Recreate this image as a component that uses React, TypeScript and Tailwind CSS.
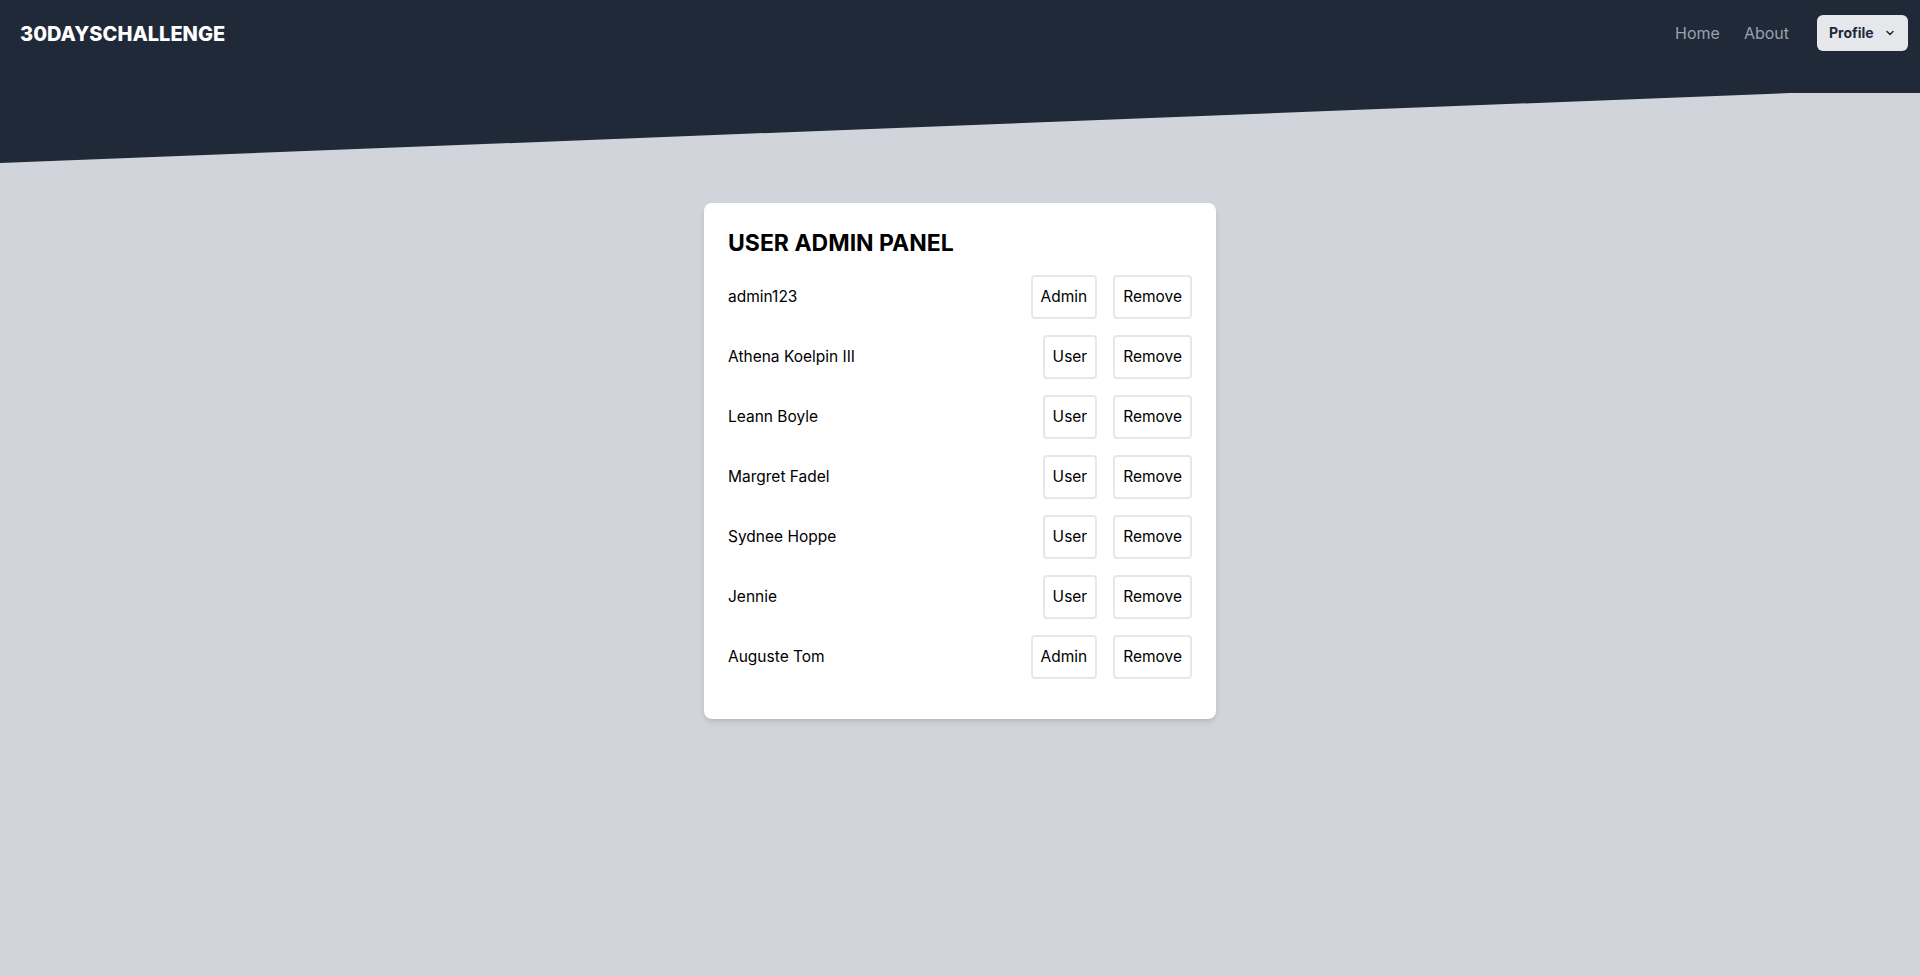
import React from "react";
import { ChevronDown } from "lucide-react";

const users = [
    { name: "admin123", role: "Admin" },
    { name: "Athena Koelpin III", role: "User" },
    { name: "Leann Boyle", role: "User" },
    { name: "Margret Fadel", role: "User" },
    { name: "Sydnee Hoppe", role: "User" },
    { name: "Jennie", role: "User" },
    { name: "Auguste Tom", role: "Admin" },
];

function Navbar() {
    return (
        <nav className="h-[66px] flex items-center justify-between pl-5 pr-3">
            <a href="#" className="text-white text-xl font-extrabold pt-px">30DAYSCHALLENGE</a>
            <div className="flex items-center">
                <a href="#" className="text-gray-400 text-base">Home</a>
                <a href="#" className="text-gray-400 text-base ml-6">About</a>
                <button className="ml-7 h-9 w-[91px] flex items-center pl-3 rounded-md bg-gray-200 text-gray-800 text-sm font-bold">
                    Profile
                    <ChevronDown size={12} strokeWidth={3} className="ml-2.5" />
                </button>
            </div>
        </nav>
    );
}

function UserRow({ name, role }: { name: string; role: string }) {
    return (
        <div className="flex items-center justify-between py-2">
            <span className="text-[15.5px] text-black">{name}</span>
            <div className="flex gap-4">
                <button className="border-2 border-gray-200 rounded px-2 h-11 text-[15.5px] text-black">{role}</button>
                <button className="border-2 border-gray-200 rounded px-2 h-11 text-[15.5px] text-black">Remove</button>
            </div>
        </div>
    );
}

export default function App() {
    return (
        <div className="min-h-screen bg-[#d1d5db] font-['Inter',sans-serif]">
            <div className="h-[163px] bg-[#1f2937] [clip-path:polygon(0_0,100%_0,100%_93px,calc(100%_-_130px)_93px,0_100%)]">
                <Navbar />
            </div>
            <main className="flex justify-center pt-10">
                <div className="w-[512px] bg-white rounded-lg shadow-md p-6 pb-8">
                    <h1 className="text-[23px] leading-8 font-bold text-black mb-2">USER ADMIN PANEL</h1>
                    {users.map((u) => (
                        <UserRow key={u.name} name={u.name} role={u.role} />
                    ))}
                </div>
            </main>
        </div>
    );
}
